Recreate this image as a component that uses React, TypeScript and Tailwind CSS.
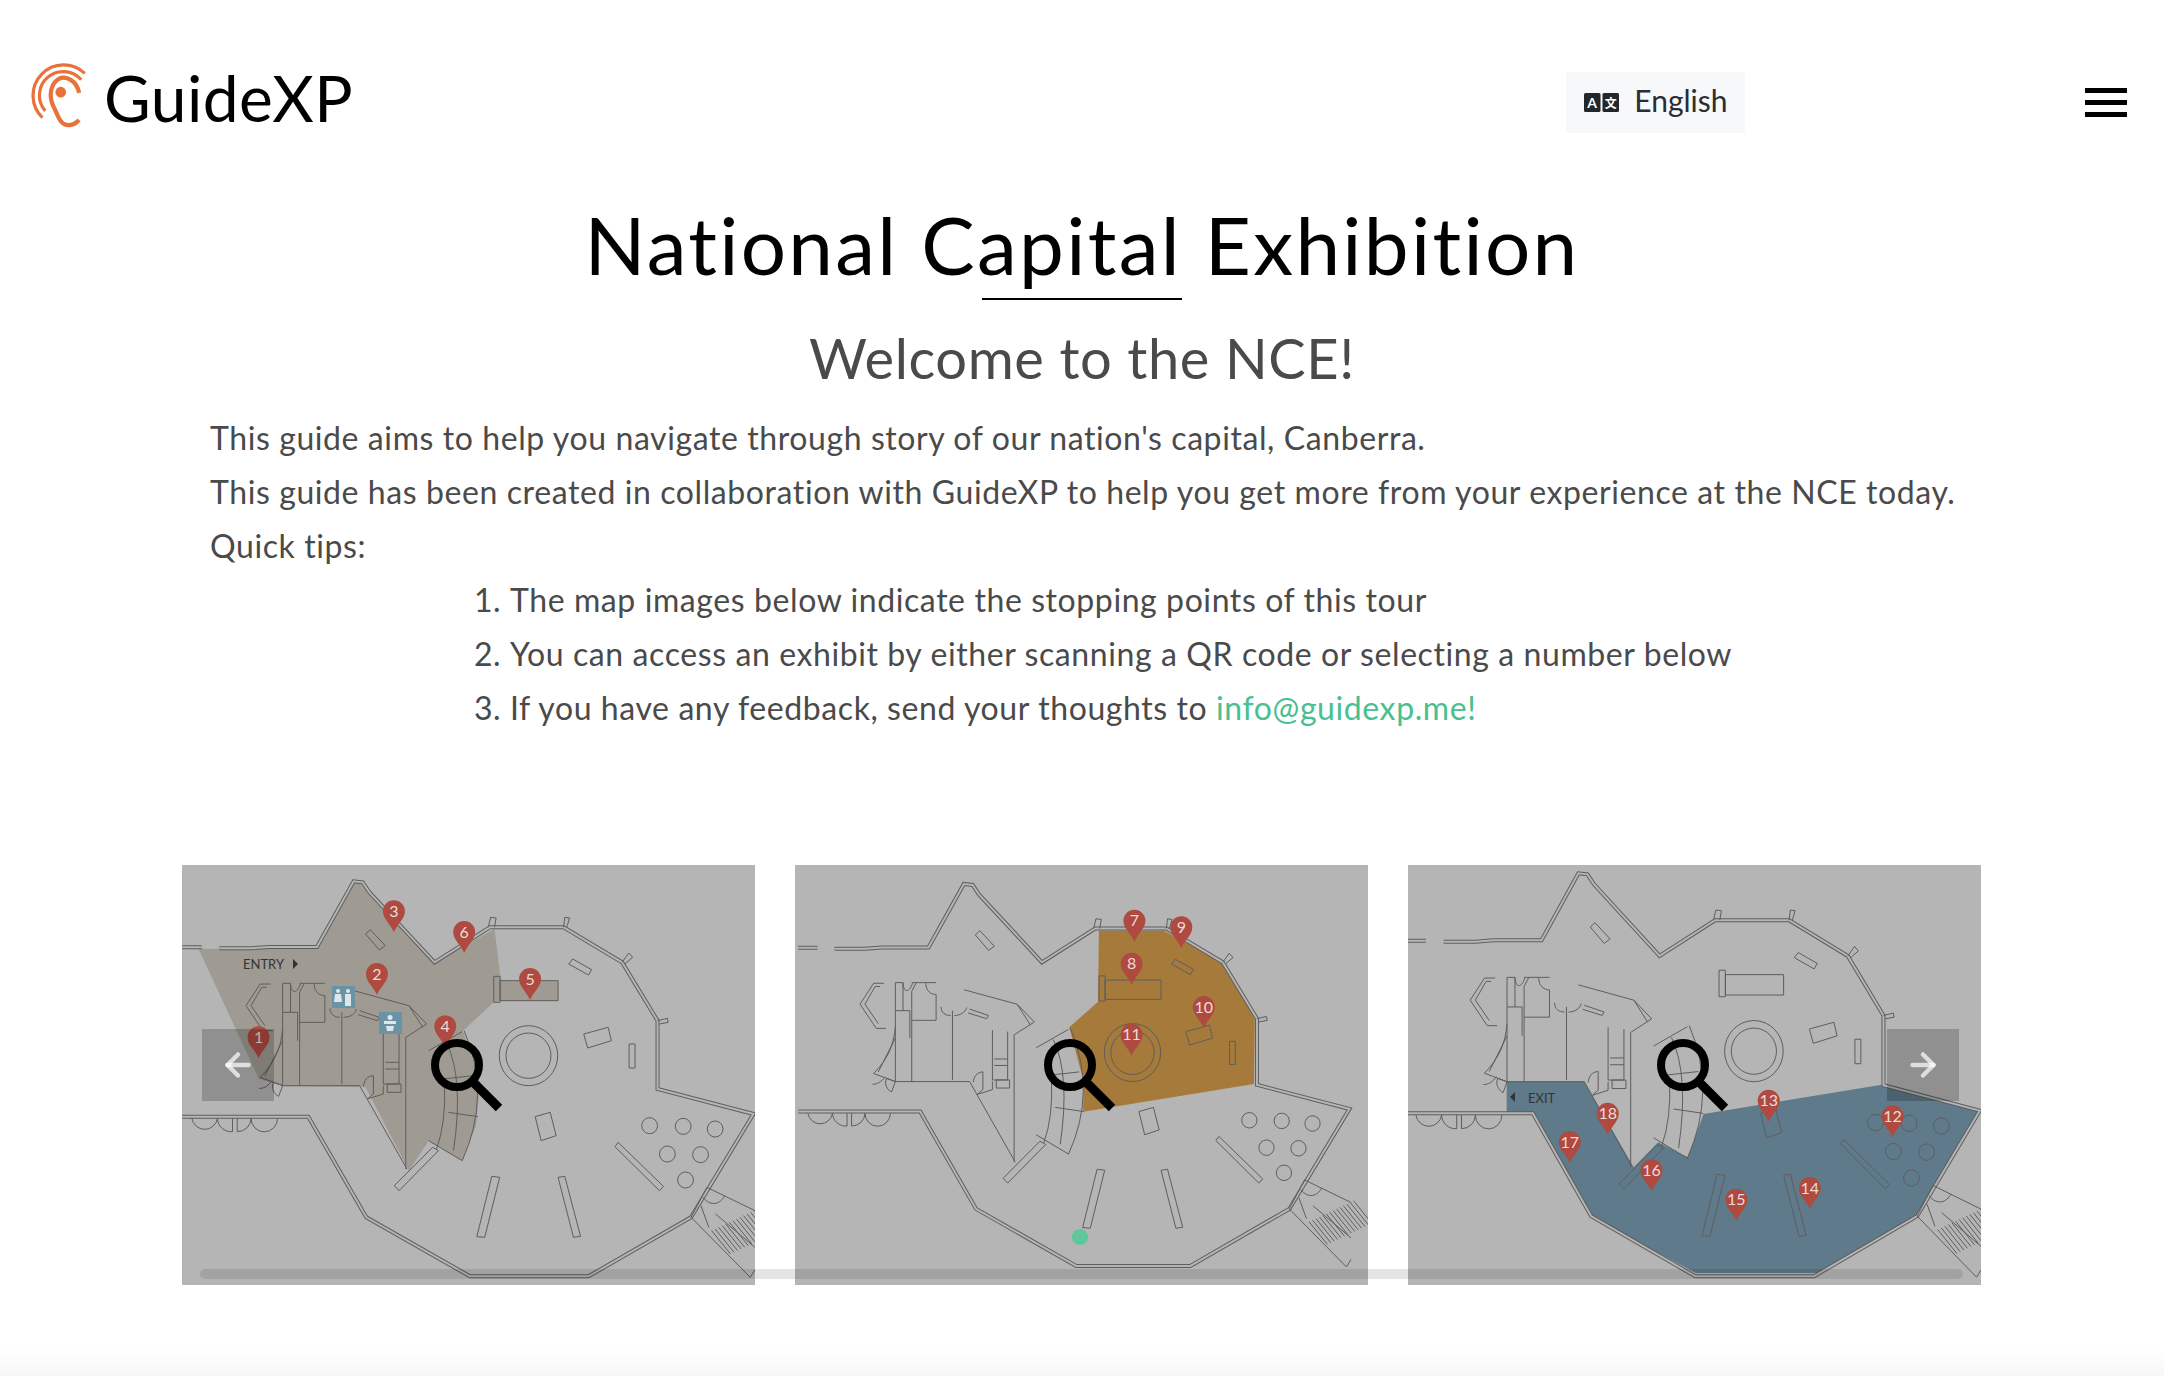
import { ArrowLeft, ArrowRight } from "lucide-react";

const SX = 573 / 1452;
const SY = 1 / 3;

const walls =
  "M30,295 H80 M125,298 H205 L250,294 H372 L465,97 L488,100 L505,130 L670,340 L810,235 L822,235 H997 L1145,340 L1235,515 V720 L1478,795 L1320,1105 L1060,1282 H760 L497,1105 L350,803 H30";

const lines = [
  "M806,235 L812,205 L826,207 L822,235 M997,235 L1000,205 L1012,207 L1005,235",
  "M1145,340 L1162,312 L1172,325 L1152,345 M1235,515 L1260,508 L1262,520 L1240,525",
  "M285,403 H305 V490 H323 V575 M285,403 V710 H480 M328,403 H392 M340,403 L328,430 V710 M328,520 H392 V440 M285,490 H305",
  "M435,490 V705 M465,425 L605,470 L650,525 L597,565 V960 M480,710 L600,960 M605,470 L640,535",
  "M540,550 V705 H580 V555 M545,640 H580 M545,660 H580 M480,485 L530,505 L525,515 L476,497",
  "M255,405 H228 L192,470 L235,545 L260,545 M245,415 H232 L205,470 L240,530",
  "M285,540 C280,600 265,640 228,685 L285,710 M285,575 L240,680",
  "M305,403 C305,430 320,440 330,405 M365,405 C365,430 380,440 392,440 M405,478 C405,495 415,505 430,505 M440,505 C455,505 470,495 472,480",
  "M225,718 C235,720 250,710 258,695 M262,700 L285,710 L275,742 C262,735 255,715 262,700",
  "M515,680 C500,680 490,695 490,712 M515,680 V735 L500,750 L540,735 V710 M550,730 V705 H585 V730 Z",
  "M745,545 Q815,740 740,935 M655,875 L740,935 M655,605 L740,548 M700,580 Q745,690 718,905 M690,690 L768,680 M705,790 L780,803",
  "M675,900 Q700,820 695,700",
  "M55,808 A33,40 0 0 0 120,808 M120,808 A35,40 0 0 0 158,848 V808 M170,808 V848 A35,40 0 0 0 205,808 M205,808 A33,40 0 0 0 272,808",
  "M1320,1105 L1360,1015 L1482,1085 M1320,1105 L1470,1285 L1482,1262 M1350,1045 C1370,1075 1395,1065 1405,1040 M1345,1070 L1365,1135 M1382,1095 L1482,1195",
];

const shapes = [
  "1135,880 1250,1012 1240,1025 1127,893",
  "815,982 835,985 797,1165 777,1163",
  "983,985 1000,982 1040,1162 1022,1165",
  "925,803 963,790 978,860 940,875",
  "1048,555 1110,535 1118,575 1058,597",
  "1163,585 1178,585 1178,657 1163,657",
  "1010,345 1020,330 1068,362 1060,378",
  "495,255 507,242 545,290 530,303",
  "820,382 836,382 836,460 820,460",
  "836,395 983,395 983,455 836,455",
  "568,1010 665,895 680,905 580,1025",
];

const stools = [
  [1215, 830],
  [1300, 832],
  [1381, 840],
  [1260, 915],
  [1344, 917],
  [1306, 993],
];

const stairs = Array.from({ length: 14 }, (_, i) => i);

function Plan({ transform }: { transform: string }) {
  return (
    <g transform={transform} className="[&_*]:[vector-effect:non-scaling-stroke]" fill="none" stroke="#5e5e5e" strokeWidth="1">
      <g transform="translate(-30,-48)">
        <path d={walls} strokeWidth="4" stroke="#5e5e5e" />
        <path d={walls} strokeWidth="2" stroke="#b5b5b5" />
        {lines.map((d) => (
          <path key={d} d={d} />
        ))}
        {shapes.map((p) => (
          <polygon key={p} points={p} />
        ))}
        {stools.map(([x, y]) => (
          <ellipse key={x + "-" + y} cx={x} cy={y} rx="20" ry="24" />
        ))}
        <ellipse cx="908" cy="620" rx="74" ry="90" />
        <ellipse cx="908" cy="620" rx="57" ry="68" />
        {stairs.map((i) => (
          <path key={i} d={`M${1372 + i * 9},${1145 - i * 5} L${1420 + i * 9},${1215 - i * 5}`} />
        ))}
      </g>
    </g>
  );
}

function Pin({ x, y, n, ox }: { x: number; y: number; n: number; ox: number }) {
  const px = (x - ox) * SX;
  const py = (y - 48) * SY;
  return (
    <g transform={`translate(${px},${py})`}>
      <path d="M0,0 C-3,-8 -11,-13 -11,-21 A11,11 0 1 1 11,-21 C11,-13 3,-8 0,0 Z" fill="#ae4a40" />
      <text x="0" y="-15.5" textAnchor="middle" fontSize="16" fill="#ecdcd8" fontFamily="Lato, sans-serif">
        {n}
      </text>
    </g>
  );
}

function FloorMap({
  ox,
  fill,
  fillColor,
  planTransform,
  pins,
  children,
}: {
  ox: number;
  fill: string[];
  fillColor: string;
  planTransform: string;
  pins: [number, number, number][];
  children?: React.ReactNode;
}) {
  return (
    <div className="relative w-[573px] h-[420px] shrink-0 bg-[#b5b5b5] overflow-hidden">
      <svg viewBox="0 0 573 420" className="block w-full h-full">
        <g transform={`scale(${SX},${SY}) translate(${-ox},-48)`}>
          {fill.map((p) => (
            <polygon key={p} points={p} fill={fillColor} />
          ))}
        </g>
        <g transform={`scale(${SX},${SY})`}>
          <Plan transform={planTransform} />
        </g>
        {children}
        {pins.map(([x, y, n]) => (
          <Pin key={n} x={x} y={y} n={n} ox={ox} />
        ))}
        <circle cx="275" cy="200" r="22" fill="none" stroke="#000" strokeWidth="8" />
        <path d="M292,218 L317,243" stroke="#000" strokeWidth="9" fill="none" />
      </svg>
    </div>
  );
}

function Logo() {
  return (
    <svg viewBox="90 95 170 195" className="w-[60px] h-[69px] shrink-0 mb-[6px]" fill="none" stroke="#e8733a">
      <path d="M128,255 A85,85 0 1 1 248,130" strokeWidth="9" />
      <path d="M136,236 A63,63 0 1 1 238,148" strokeWidth="9" />
      <path d="M232,185 C225,150 195,135 175,145 C150,160 145,195 160,225 C168,240 172,255 180,265 C192,282 215,280 232,262" strokeWidth="12" />
      <circle cx="180" cy="183" r="15" fill="#e8733a" stroke="none" />
    </svg>
  );
}

export default function App() {
  return (
    <div className="relative w-full min-h-[1376px] bg-white font-['Lato',sans-serif] overflow-hidden">
      <header className="flex items-center h-[134px] pt-[70px]">
        <div className="flex items-center ml-[29px] gap-[15px] mb-[8px]">
          <Logo />
          <span className="text-[64px] leading-none text-black tracking-[0.5px]">GuideXP</span>
        </div>
        <button className="flex items-center ml-[1213px] w-[179px] h-[61px] pl-[18px] gap-[15px] bg-[#f7f8fa] text-[30px] text-[#2a2d33]">
          <svg viewBox="0 0 35 19" className="w-[35px] h-[19px]">
            <rect x="0" y="0" width="16.5" height="19" rx="1.5" fill="#23262b" />
            <rect x="18.5" y="0" width="16.5" height="19" rx="1.5" fill="#23262b" />
            <text x="8.2" y="15" textAnchor="middle" fontSize="14" fontWeight="700" fill="#fff" fontFamily="Lato, sans-serif">A</text>
            <text x="26.8" y="14.5" textAnchor="middle" fontSize="12" fontWeight="700" fill="#fff" fontFamily="'Noto Sans CJK SC', sans-serif">文</text>
          </svg>
          <span className="mb-[4px]">English</span>
        </button>
        <div className="flex flex-col gap-[7px] ml-[340px] w-[42px]">
          <span className="block h-[5px] bg-black" />
          <span className="block h-[5px] bg-black" />
          <span className="block h-[5px] bg-black" />
        </div>
      </header>

      <main>
        <h1 className="mt-[65px] text-center text-[80px] leading-[90px] text-black tracking-[2.3px]">National Capital Exhibition</h1>
        <div className="w-[200px] h-[2px] mx-auto mt-[9px] bg-black" />
        <h2 className="mt-[25px] text-center text-[56px] leading-[66px] text-[#4a4a4a] tracking-[0.6px]">Welcome to the NCE!</h2>
        <div className="mt-[20px] pl-[210px] text-[32px] leading-[54px] text-[#4a4a4a] tracking-[0.59px]">
          <p>This guide aims to help you navigate through story of our nation's capital, Canberra.</p>
          <p>This guide has been created in collaboration with GuideXP to help you get more from your experience at the NCE today.</p>
          <p>Quick tips:</p>
          <ol className="list-decimal pl-[300px]">
            <li>The map images below indicate the stopping points of this tour</li>
            <li>You can access an exhibit by either scanning a QR code or selecting a number below</li>
            <li>
              If you have any feedback, send your thoughts to <a className="text-[#48c08f]">info@guidexp.me!</a>
            </li>
          </ol>
        </div>

        <div className="relative mt-[130px] ml-[182px] w-[1800px] h-[420px]">
          <div className="flex gap-[40px]">
            <FloorMap
              ox={30}
              fillColor="#9f9b93"
              planTransform="translate(0,0)"
              fill={[
                "72,300 372,297 465,97 488,100 670,340 822,240 838,395 838,455 820,460 742,545 785,700 775,830 740,935 655,875 605,965 495,715 290,712 225,690",
                "836,395 983,395 983,455 836,455",
              ]}
              pins={[
                [224, 628, 1],
                [524, 438, 2],
                [567, 250, 3],
                [697, 595, 4],
                [912, 453, 5],
                [745, 312, 6],
              ]}
            >
              <text x="61" y="104" fontSize="13" fill="#333" fontFamily="Lato, sans-serif">ENTRY</text>
              <path d="M111,94 L116,99 L111,104 Z" fill="#333" />
              <rect x="150" y="121" width="23" height="22" fill="#6b93a6" />
              <rect x="197" y="147" width="23" height="22" fill="#6b93a6" />
              <path d="M156,124 a2,2 0 1 0 .1,0 M153,129 h6 l1,8 h-8 Z M166,124 a2,2 0 1 0 .1,0 M163,129 h6 v12 h-6 Z" fill="#dfe6ea" />
              <path d="M208,150 a2.5,2.5 0 1 0 .1,0 M202,156 h12 v3 h-12 Z M204,161 h8 l-1,5 h-6 Z" fill="#dfe6ea" />
            </FloorMap>
            <FloorMap
              ox={40}
              fillColor="#a67a3b"
              planTransform="translate(8.4,9.6) scale(0.9645,0.967)"
              fill={["810,245 975,245 1125,340 1205,510 1203,705 770,788 772,700 735,535 808,458"]}
              pins={[
                [900, 278, 7],
                [893, 407, 8],
                [1019, 298, 9],
                [1076, 537, 10],
                [893, 620, 11],
              ]}
            >
              <ellipse cx="285" cy="372" rx="8" ry="8" fill="#5ec79b" />
            </FloorMap>
            <FloorMap
              ox={46}
              fillColor="#5f7a8a"
              planTransform="translate(-5,-25) scale(1.004,1.02)"
              fill={["296,697 492,697 618,955 680,880 755,925 795,795 1258,705 1495,780 1342,1095 1082,1272 775,1272 505,1100 360,793 296,790"]}
              pins={[
                [1274, 865, 12],
                [960, 818, 13],
                [1064, 1080, 14],
                [878, 1115, 15],
                [663, 1027, 16],
                [456, 942, 17],
                [552, 857, 18],
              ]}
            >
              <path d="M107,227 L102,232 L107,237 Z" fill="#333" />
              <text x="120" y="238" fontSize="13" fill="#333" fontFamily="Lato, sans-serif">EXIT</text>
            </FloorMap>
          </div>
          <div className="absolute left-[20px] top-[164px] flex items-center justify-center w-[72px] h-[72px] bg-black/20 text-white/70">
            <ArrowLeft size={36} strokeWidth={3} />
          </div>
          <div className="absolute left-[1705px] top-[164px] flex items-center justify-center w-[72px] h-[72px] bg-black/20 text-white/70">
            <ArrowRight size={36} strokeWidth={3} />
          </div>
          <div className="absolute left-[18px] top-[404px] w-[1763px] h-[10px] rounded-full bg-black/10" />
        </div>
      </main>
      <div className="absolute left-0 bottom-0 w-full h-[28px] bg-gradient-to-b from-white to-[#f7f7f7]" />
    </div>
  );
}
